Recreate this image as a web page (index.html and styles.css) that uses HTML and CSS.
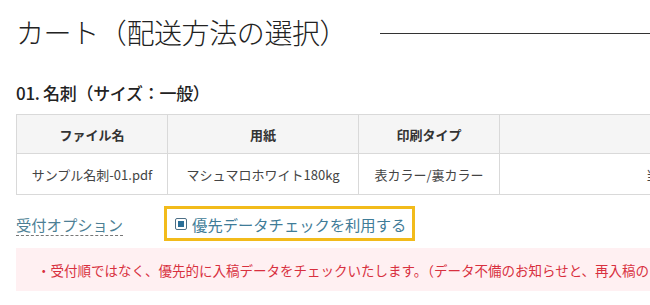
FILE: index.html
```html
<!DOCTYPE html>
<html lang="ja">
<head>
    <meta charset="UTF-8">
    <meta name="viewport" content="width=device-width, initial-scale=1.0">
    <title>カート（配送方法の選択）</title>
    <link rel="stylesheet" href="styles.css">
</head>
<body>
    <div class="page">
        <h1 class="page-title"><span>カート（配送方法の選択）</span></h1>

        <h2 class="item-title">01. 名刺（サイズ：一般）</h2>

        <table class="item-table">
            <thead>
                <tr>
                    <th class="col-file">ファイル名</th>
                    <th class="col-paper">用紙</th>
                    <th class="col-print">印刷タイプ</th>
                    <th class="col-extra">納期</th>
                </tr>
            </thead>
            <tbody>
                <tr>
                    <td>サンプル名刺-01.pdf</td>
                    <td>マシュマロホワイト180kg</td>
                    <td>表カラー/裏カラー</td>
                    <td>当日発送</td>
                </tr>
            </tbody>
        </table>

        <div class="option-row">
            <span class="option-label">受付オプション</span>
            <label class="option-check">
                <span class="check-box"></span>
                優先データチェックを利用する
            </label>
        </div>

        <div class="notice">
            <p>・受付順ではなく、優先的に入稿データをチェックいたします。（データ不備のお知らせと、再入稿のご依頼を優先的に行います）</p>
        </div>
    </div>
</body>
</html>
```

FILE: styles.css
```css
html, body {
    margin: 0;
    padding: 0;
    overflow: hidden;
}
body {
    font-family: "Noto Sans CJK JP", "Noto Sans", sans-serif;
    background: #fff;
    color: #333;
}
.page {
    padding: 13px 0 0 16px;
    width: 1100px;
}
.page-title {
    display: flex;
    align-items: center;
    margin: 0;
    width: 634px;
    font-size: 28px;
    font-weight: 300;
    color: #222;
    line-height: 38px;
    letter-spacing: -0.4px;
}
.page-title::after {
    content: "";
    flex: 1;
    height: 1px;
    background: #333;
    margin-left: 33px;
    margin-top: 2px;
}
.item-title {
    margin: 30px 0 0;
    font-size: 17px;
    font-weight: 500;
    color: #222;
    line-height: 24px;
    letter-spacing: -0.3px;
}
.item-table {
    margin-top: 9px;
    border-collapse: collapse;
    font-size: 13px;
    color: #444;
}
.item-table th,
.item-table td {
    border: 1px solid #d9d9d9;
    text-align: center;
    padding: 0;
}
.item-table th {
    background: #f5f5f5;
    font-weight: bold;
    color: #333;
    height: 38px;
}
.item-table td {
    height: 40px;
}
.col-file { width: 150px; }
.col-paper { width: 190px; }
.col-print { width: 140px; }
.col-extra { width: 344px; }
.option-row {
    display: flex;
    align-items: center;
    margin-top: 11px;
    height: 35px;
}
.option-label {
    font-size: 15.3px;
    color: #4d7f95;
    border-bottom: 1px dashed #777;
    line-height: 20px;
    padding-bottom: 1px;
    margin-top: 3px;
}
.option-check {
    display: flex;
    align-items: center;
    margin-left: 41px;
    height: 29px;
    padding: 0 6px 0 8px;
    border: 3px solid #f2bb1b;
    font-size: 15.3px;
    color: #3f7c98;
}
.check-box {
    width: 10px;
    height: 10px;
    border: 1px solid #4d6f86;
    border-radius: 2px;
    margin-right: 5px;
    position: relative;
    background: #fff;
}
.check-box::after {
    content: "";
    position: absolute;
    left: 2px;
    top: 2px;
    width: 6px;
    height: 6px;
    background: #2a6e97;
}
.notice {
    margin-top: 7px;
    width: 660px;
    height: 43px;
    background: #fff0f2;
    display: flex;
    align-items: center;
}
.notice p {
    margin: 0 0 0 21px;
    white-space: nowrap;
    font-size: 13.5px;
    color: #d8303f;
}
```
